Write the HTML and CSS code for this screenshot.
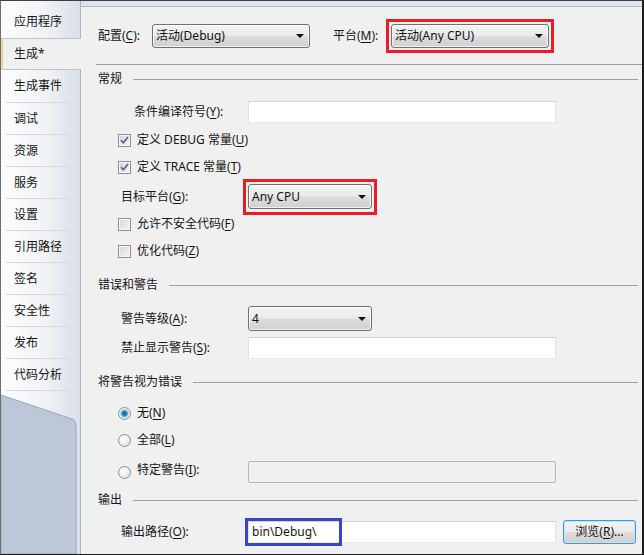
FILE: index.html
```html
<!DOCTYPE html>
<html lang="zh-CN">
<head>
    <meta charset="UTF-8">
    <meta name="viewport" content="width=device-width, initial-scale=1.0">
    <title>项目属性 - 生成</title>
    <link rel="stylesheet" href="styles.css">
</head>
<body>
    <div class="window">
        <nav class="sidebar">
            <ul class="tabs">
                <li class="tab first">应用程序</li>
                <li class="tab active">生成*</li>
                <li class="tab plain">生成事件</li>
                <li class="tab">调试</li>
                <li class="tab">资源</li>
                <li class="tab">服务</li>
                <li class="tab">设置</li>
                <li class="tab">引用路径</li>
                <li class="tab">签名</li>
                <li class="tab">安全性</li>
                <li class="tab">发布</li>
                <li class="tab">代码分析</li>
            </ul>
            <div class="sidebar-foot">
                <svg width="79" height="164" viewBox="0 0 79 164">
                    <path d="M0 5 L71 29 Q75 30.5 75 35 V164 H0 Z" fill="#bcc8d8" stroke="#97a6bb" stroke-width="1"/>
                </svg>
            </div>
        </nav>

        <main class="content">
            <div class="top-row">
                <span class="top-label">配置(<u>C</u>):</span>
                <div class="combo wide">活动(Debug)</div>
                <span class="top-label second">平台(<u>M</u>):</span>
                <div class="mark-red">
                    <div class="combo wide">活动(Any CPU)</div>
                </div>
            </div>
            <div class="top-rule"></div>

            <!-- 常规 -->
            <div class="group-title">常规</div>
            <div class="field symbols">
                <span>条件编译符号(<u>Y</u>):</span>
                <div class="input"></div>
            </div>
            <div class="check-row mt-8">
                <span class="checkbox checked">
                    <svg width="11" height="11" viewBox="0 0 11 11"><path d="M2 5.2 L4.4 7.8 L9 2" fill="none" stroke="#56688e" stroke-width="1.7"/></svg>
                </span>
                <span>定义 DEBUG 常量(<u>U</u>)</span>
            </div>
            <div class="check-row mt-9">
                <span class="checkbox checked">
                    <svg width="11" height="11" viewBox="0 0 11 11"><path d="M2 5.2 L4.4 7.8 L9 2" fill="none" stroke="#56688e" stroke-width="1.7"/></svg>
                </span>
                <span>定义 TRACE 常量(<u>T</u>)</span>
            </div>
            <div class="field mt-3">
                <span>目标平台(<u>G</u>):</span>
                <div class="mark-red small">
                    <div class="combo narrow">Any CPU</div>
                </div>
            </div>
            <div class="check-row">
                <span class="checkbox"></span>
                <span>允许不安全代码(<u>F</u>)</span>
            </div>
            <div class="check-row mt-9">
                <span class="checkbox"></span>
                <span>优化代码(<u>Z</u>)</span>
            </div>

            <!-- 错误和警告 -->
            <div class="group-title mt-16">错误和警告</div>
            <div class="field mt-12">
                <span>警告等级(<u>A</u>):</span>
                <div class="combo narrow">4</div>
            </div>
            <div class="field mt-6">
                <span>禁止显示警告(<u>S</u>):</span>
                <div class="input"></div>
            </div>

            <!-- 将警告视为错误 -->
            <div class="group-title mt-14">将警告视为错误</div>
            <div class="check-row mt-13">
                <span class="radio on"></span>
                <span>无(<u>N</u>)</span>
            </div>
            <div class="check-row mt-9">
                <span class="radio"></span>
                <span>全部(<u>L</u>)</span>
            </div>
            <div class="field radio-field mt-12">
                <div class="radio-label">
                    <span class="radio"></span>
                    <span class="lift">特定警告(<u>I</u>):</span>
                </div>
                <div class="input disabled"></div>
            </div>

            <!-- 输出 -->
            <div class="group-title mt-8">输出</div>
            <div class="field output mt-11">
                <span>输出路径(<u>O</u>):</span>
                <div class="path-box">
                    <div class="input">bin\Debug\</div>
                    <div class="mark-blue"></div>
                </div>
                <button class="browse">浏览(<u>R</u>)...</button>
            </div>
        </main>
    </div>
</body>
</html>
```

FILE: styles.css
```css
body {
    margin: 0;
    font-family: "Noto Sans", "Noto Sans CJK SC", sans-serif;
    font-size: 12px;
    line-height: 16px;
    color: #151515;
    background: #f0f0f0;
}
u {
    text-decoration-thickness: 1px;
    text-underline-offset: 2px;
}
.window {
    width: 641px;
    height: 553px;
    display: flex;
    background: #f0f0f0;
    border-top: 1px solid #3f3f3f;
    border-left: 1px solid #6d6d6d;
    border-right: 2px solid #1c1c1c;
    border-bottom: 1px solid #1c1c1c;
}

/* Sidebar tabs */
.sidebar {
    width: 80px;
    flex-shrink: 0;
    display: flex;
    flex-direction: column;
}
.tabs {
    list-style: none;
    margin: 0;
    padding: 0;
}
.tab {
    height: 32px;
    box-sizing: border-box;
    padding: 1px 0 0 13px;
    line-height: 31px;
    border-right: 1px solid #a9b5c6;
    background:
        linear-gradient(#d3d9e2, #d3d9e2) no-repeat 5px 0 / 64px 1px,
        linear-gradient(to right, #fdfdfd, #f1f2f4 55%, #d9dfe8);
}
.tab.first {
    height: 37px;
    padding-top: 5px;
    line-height: 32px;
}
.tab.first,
.tab.plain {
    background: linear-gradient(to right, #fdfdfd, #f1f2f4 55%, #d9dfe8);
}
.tab.plain {
    padding-top: 0;
    line-height: 32px;
}
.tab.active {
    background: #f0f0f0;
    border-right: none;
    border-top: 1px solid #b9c3d0;
    border-bottom: 1px solid #b9c3d0;
    border-left: 2px solid #ead19f;
    padding: 0 0 0 11px;
    line-height: 30px;
}
.sidebar-foot {
    flex: 1;
    border-right: 1px solid #a9b5c6;
    background:
        linear-gradient(#d3d9e2, #d3d9e2) no-repeat 5px 0 / 64px 1px,
        linear-gradient(to right, #fdfdfd, #f1f2f4 55%, #d9dfe8);
    overflow: hidden;
}
.sidebar-foot svg {
    display: block;
}

/* Main panel */
.content {
    flex: 1;
    padding: 18px 4px 0 17px;
    background: linear-gradient(to bottom, #dde4ec 0, #dde4ec 5px, #b0bccb 5px, #b0bccb 6px, #f0f0f0 6px);
}
.top-row {
    display: flex;
    align-items: center;
    height: 34px;
}
.top-label {
    width: 54px;
}
.top-label.second {
    width: 53px;
    margin-left: 23px;
}
.top-rule {
    height: 1px;
    background: #a0a0a0;
    margin: 11px -4px 0 -2px;
}
.group-title {
    display: flex;
    align-items: center;
    gap: 11px;
    height: 18px;
    line-height: 18px;
    margin-top: 5px;
}
.group-title::after {
    content: "";
    flex: 1;
    height: 1px;
    background: #a0a0a0;
}

.field {
    display: grid;
    grid-template-columns: 127px 308px;
    align-items: center;
    padding-left: 23px;
}
.field.symbols {
    padding-left: 36px;
    grid-template-columns: 114px 308px;
    margin-top: 13px;
}
.field.radio-field {
    padding-left: 20px;
    grid-template-columns: 130px 308px;
}
.field.output {
    grid-template-columns: 127px 308px auto;
}
.radio-label {
    display: flex;
    align-items: center;
    gap: 6px;
}
.lift {
    position: relative;
    top: -2px;
}
.check-row {
    display: flex;
    align-items: center;
    gap: 6px;
    height: 18px;
    padding-left: 20px;
}

.mt-3 { margin-top: 3px; }
.mt-6 { margin-top: 6px; }
.mt-8 { margin-top: 8px; }
.mt-9 { margin-top: 9px; }
.mt-11 { margin-top: 11px; }
.mt-12 { margin-top: 12px; }
.mt-13 { margin-top: 13px; }
.mt-14 { margin-top: 14px; }
.mt-16 { margin-top: 16px; }

/* Controls */
.combo {
    box-sizing: border-box;
    display: flex;
    align-items: center;
    justify-content: space-between;
    padding: 0 5px 0 3px;
    border: 1px solid #707070;
    border-radius: 3px;
    background: linear-gradient(#f3f3f3, #ebebeb 48%, #dddddd 52%, #d0d0d0);
    box-shadow: inset 0 0 0 1px rgba(255, 255, 255, 0.7);
    color: #111;
}
.combo::after {
    content: "";
    border-top: 4px solid #111;
    border-left: 4px solid transparent;
    border-right: 4px solid transparent;
}
.combo.wide {
    width: 158px;
    height: 24px;
}
.combo.narrow {
    width: 124px;
    height: 25px;
}
.mark-red {
    border: 3px solid #ec1c24;
    padding: 2px;
}
.mark-red.small {
    margin-left: -5px;
    width: 124px;
    padding-bottom: 3px;
}
.input {
    box-sizing: border-box;
    height: 22px;
    padding: 2px 3px 0;
    background: #fff;
    border: 1px solid;
    border-color: #cdd1d6 #e0e3e8 #e6e9ed #e0e3e8;
}
.input.disabled {
    background: #f0f0f0;
    border: 1px solid #b2b6ba;
    border-radius: 2px;
}
.path-box {
    position: relative;
}
.mark-blue {
    position: absolute;
    left: -3px;
    top: -3px;
    width: 97px;
    height: 28px;
    box-sizing: border-box;
    border: 3px solid #3b43c9;
}
.browse {
    margin-left: 7px;
    width: 73px;
    height: 24px;
    padding: 0;
    font: inherit;
    color: #111;
    border: 1px solid #3c9ad6;
    border-radius: 3px;
    background: linear-gradient(#f3f3f3, #ebebeb 48%, #dddddd 52%, #d0d0d0);
    box-shadow: inset 0 0 0 1px #bfe5f8;
}
.checkbox {
    box-sizing: border-box;
    width: 13px;
    height: 13px;
    display: flex;
    align-items: center;
    justify-content: center;
    border: 1px solid #8e8f8f;
    background: linear-gradient(135deg, #d4d6d9, #f6f6f6);
    box-shadow: inset 0 0 0 1px #f8f8f8;
}
.radio {
    box-sizing: border-box;
    width: 13px;
    height: 13px;
    border-radius: 50%;
    border: 1px solid #8e8f8f;
    background: radial-gradient(circle at 40% 35%, #ffffff, #e9e9e9 60%, #d2d2d2);
}
.radio.on {
    background: radial-gradient(circle, #1d5476 0, #2a83b4 2px, #7cc6e6 3.5px, #dcedf5 4.5px, #f2f2f2 5.5px);
}
```
